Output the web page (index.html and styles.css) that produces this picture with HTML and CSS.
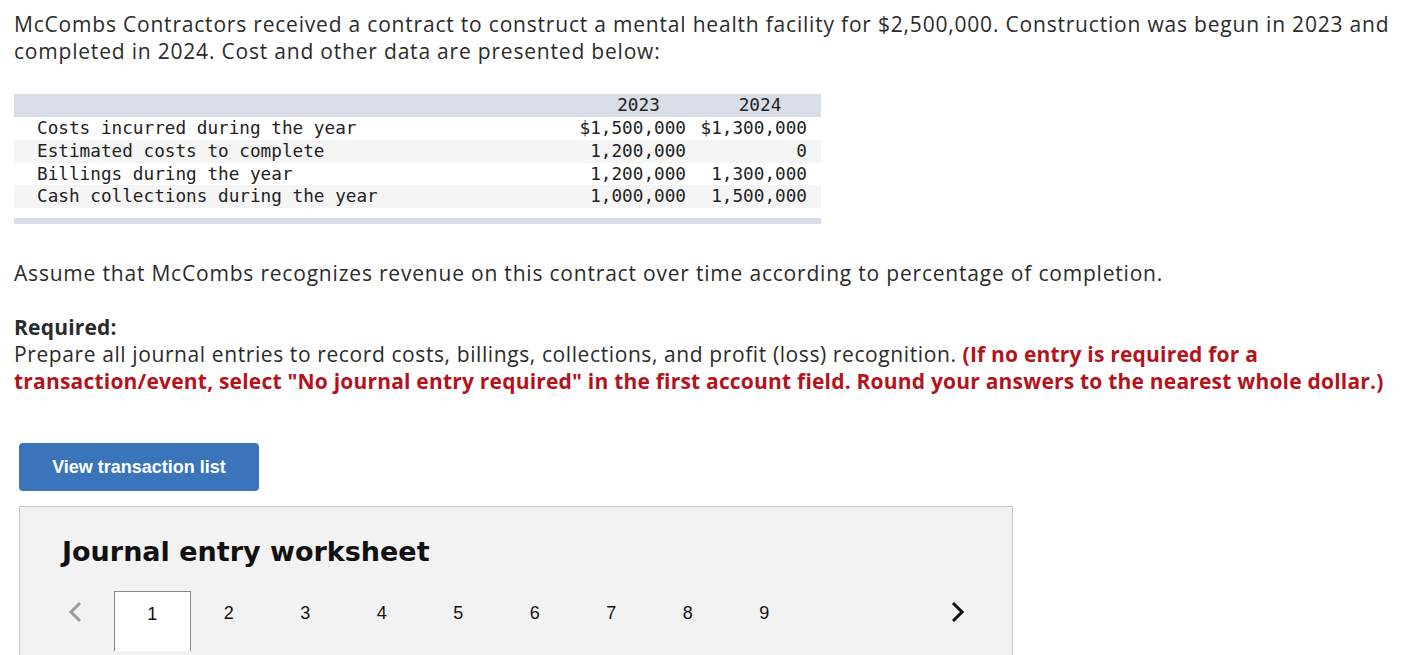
FILE: index.html
```html
<!DOCTYPE html>
<html>
<head>
<meta charset="utf-8">
<link rel="stylesheet" href="styles.css">
</head>
<body>
<div class="page">
  <p class="intro">McCombs Contractors received a contract to construct a mental health facility for $2,500,000. Construction was begun in 2023 and completed in 2024. Cost and other data are presented below:</p>

  <div class="data">
    <div class="row head"><span class="lbl"></span><span class="c2">2023</span><span class="c3">2024</span></div>
    <div class="row"><span class="lbl">Costs incurred during the year</span><span class="c2">$1,500,000</span><span class="c3">$1,300,000</span></div>
    <div class="row alt"><span class="lbl">Estimated costs to complete</span><span class="c2">1,200,000</span><span class="c3">0</span></div>
    <div class="row"><span class="lbl">Billings during the year</span><span class="c2">1,200,000</span><span class="c3">1,300,000</span></div>
    <div class="row alt"><span class="lbl">Cash collections during the year</span><span class="c2">1,000,000</span><span class="c3">1,500,000</span></div>
    <div class="row blank"></div>
    <div class="foot"></div>
  </div>

  <p class="assume">Assume that McCombs recognizes revenue on this contract over time according to percentage of completion.</p>

  <p class="required"><strong>Required:</strong><br>Prepare all journal entries to record costs, billings, collections, and profit (loss) recognition. <strong class="red">(If no entry is required for a transaction/event, select "No journal entry required" in the first account field. Round your answers to the nearest whole dollar.)</strong></p>

  <button class="view-btn">View transaction list</button>

  <div class="worksheet">
    <h2 class="ws-title">Journal entry worksheet</h2>
    <div class="tabs">
      <span class="arrow prev"><svg width="16" height="22" viewBox="0 0 16 22"><path d="M13 2 L4 11 L13 20" fill="none" stroke="#9a9a9a" stroke-width="3"/></svg></span>
      <span class="tab active">1</span>
      <span class="tab">2</span>
      <span class="tab">3</span>
      <span class="tab">4</span>
      <span class="tab">5</span>
      <span class="tab">6</span>
      <span class="tab">7</span>
      <span class="tab">8</span>
      <span class="tab">9</span>
      <span class="spacer"></span>
      <span class="arrow next"><svg width="16" height="22" viewBox="0 0 16 22"><path d="M3 2 L12 11 L3 20" fill="none" stroke="#111" stroke-width="3"/></svg></span>
    </div>
  </div>
</div>
</body>
</html>
```

FILE: styles.css
```css
html, body {
  margin: 0;
  padding: 0;
  background: #fff;
}

.page {
  padding: 11px 14px 0 14px;
  font-family: "Open Sans", "Lato", sans-serif;
  font-size: 21px;
  letter-spacing: 0.8px;
  color: #2b2b2b;
}

.intro {
  margin: 0;
  line-height: 27px;
  width: 1385px;
}

.data {
  margin-top: 29px;
  width: 807px;
  font-family: "DejaVu Sans Mono", "Liberation Mono", monospace;
  font-size: 17.7px;
  letter-spacing: 0;
  color: #222;
}

.row {
  display: flex;
  height: 22.75px;
  line-height: 23px;
  background: #fff;
}

.row.alt {
  background: #f5f5f5;
}

.row.head {
  height: 23px;
  background: #d9dde7;
}

.row.blank {
  height: 10px;
}

.lbl {
  flex: 1;
  padding-left: 23px;
  white-space: pre;
}

.c2 {
  width: 114px;
  padding-right: 7px;
  text-align: right;
}

.c3 {
  width: 114px;
  padding-right: 14px;
  text-align: right;
}

.row.head .c2 {
  text-align: center;
  padding-left: 12px;
  padding-right: 0;
  width: 109px;
}

.row.head .c3 {
  text-align: center;
  padding-left: 12px;
  padding-right: 6px;
  width: 110px;
}

.foot {
  height: 6px;
  background: #d9dde7;
}

.assume {
  margin: 36px 0 0 0;
  line-height: 27px;
}

.required {
  margin: 27px 0 0 0;
  line-height: 27px;
  width: 1385px;
  letter-spacing: 0.6px;
}

.required strong {
  font-weight: 700;
  letter-spacing: 0.2px;
}

.red {
  color: #b5121b;
}

.view-btn {
  display: block;
  margin: 48px 0 0 5px;
  width: 240px;
  height: 48px;
  background: #3a75bb;
  color: #fff;
  border: none;
  border-radius: 4px;
  font-family: "Liberation Sans", Arial, sans-serif;
  font-weight: 700;
  font-size: 18px;
  letter-spacing: 0;
}

.worksheet {
  margin: 15px 0 0 5px;
  width: 992px;
  height: 160px;
  background: #f2f2f2;
  border: 1px solid #c8c8c8;
  letter-spacing: 0;
}

.ws-title {
  margin: 29px 0 0 42px;
  font-family: "DejaVu Sans", Verdana, sans-serif;
  font-weight: 700;
  font-size: 27px;
  line-height: 32px;
  color: #111;
}

.tabs {
  display: flex;
  align-items: flex-start;
  margin: 23px 0 0 47px;
}

.arrow {
  width: 47px;
  padding-top: 10px;
}

.arrow.next {
  width: auto;
  padding-right: 46px;
}

.tab {
  width: 76.5px;
  height: 60px;
  line-height: 44px;
  text-align: center;
  font-family: "Liberation Sans", Arial, sans-serif;
  font-size: 18px;
  color: #111;
  box-sizing: border-box;
}

.tab.active {
  background: #fff;
  border: 1px solid #888;
  border-bottom: none;
}

.spacer {
  flex: 1;
}
```
